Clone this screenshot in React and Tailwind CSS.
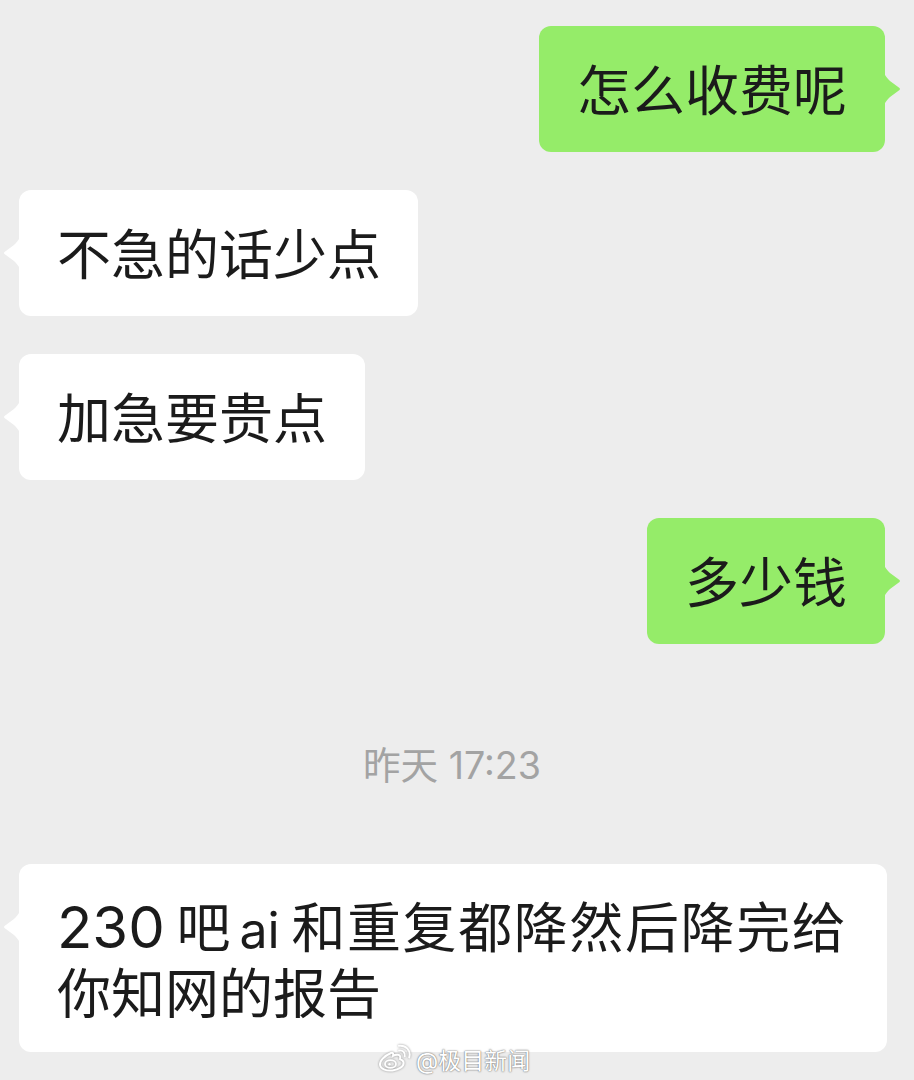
const font = { fontFamily: 'Inter, "Noto Sans CJK SC", sans-serif' };

function Tail({ side, color }) {
  const right = side === "right";
  return (
    <svg
      viewBox="0 0 17 32"
      className={`absolute top-[47px] h-[32px] w-[17px] ${right ? "right-[-16px]" : "left-[-16px] -scale-x-100"}`}
      fill={color}
    >
      <path d="M0 0 C2 4 4 6 6 8 L15.5 15 Q16.5 16 15.5 17 L6 24 C4 26 2 28 0 32 Z" />
    </svg>
  );
}

function Bubble({ side, children, className = "" }) {
  const right = side === "right";
  return (
    <div
      className={`relative rounded-[12px] px-[38px] text-[54px] leading-[67px] text-[#1b1b1b] ${right ? "self-end bg-[#95ec69]" : "self-start bg-white"} ${className}`}
    >
      <Tail side={side} color={right ? "#95ec69" : "#ffffff"} />
      {children}
    </div>
  );
}

function WeiboMark() {
  return (
    <svg viewBox="0 0 34 28" className="h-[28px] w-[34px]" fill="none" stroke="#ffffff" style={{ filter: "drop-shadow(0 0 1px #8f8f8f)" }}>
      <path d="M13 9 C6 12 1.5 17 2 21 C2.6 25.5 9 27 14.5 26.4 C21 25.6 26 22.5 25.6 18.6 C25.3 16.4 23.4 15.6 22 15 C22.8 12.6 21.8 11 19.8 10.8 C18 10.6 16 11.4 15 12 C15.6 9.6 15 8.4 13 9 Z" strokeWidth="2" />
      <ellipse cx="12.5" cy="20" rx="5.5" ry="3.8" strokeWidth="1.8" />
      <circle cx="11.5" cy="20.2" r="1.2" fill="#ffffff" stroke="none" />
      <path d="M21 6.5 C24.5 5.8 27.6 8.6 26.8 12.4" strokeWidth="1.8" strokeLinecap="round" />
      <path d="M21 1.8 C27.8 0.8 33.2 6.4 31.2 13.4" strokeWidth="2" strokeLinecap="round" />
    </svg>
  );
}

export default function App() {
  return (
    <div className="relative flex h-[1080px] w-[914px] flex-col overflow-hidden bg-[#ededed] pl-[19px] pr-[29px] pt-[26px]" style={font}>
      <Bubble side="right" className="flex h-[126px] items-center pt-[5px]">怎么收费呢</Bubble>
      <Bubble side="left" className="mt-[38px] flex h-[126px] w-[399px] items-center whitespace-nowrap pt-[5px]">不急的话少点</Bubble>
      <Bubble side="left" className="mt-[38px] flex h-[126px] items-center pt-[5px]">加急要贵点</Bubble>
      <Bubble side="right" className="mt-[38px] flex h-[126px] items-center pt-[5px]">多少钱</Bubble>
      <div className="mt-[99px] h-[46px] text-center text-[37.6px] leading-[46px] text-[#a3a3a3]">昨天 17:23</div>
      <Bubble side="left" className="mt-[75px] mr-[-2px] w-[868px] pb-[24px] pt-[30px]">
        <div className="h-[67px] whitespace-nowrap tracking-[1.6px] [word-spacing:-5px]">
          <span className="text-[58px] tracking-[0px]">230</span>{" "}<span className="tracking-[-3px]">吧</span>{" "}
          <span className="text-[50px] tracking-[0px]">ai</span>{" "}和重复都降然后降完给
        </div>
        <div>你知网的报告</div>
      </Bubble>
      <div className="absolute left-[378px] top-[1041px] flex items-center gap-[4px]">
        <WeiboMark />
        <span className="mt-[6px] text-[23px] leading-[28px] text-white" style={{ textShadow: "0 0 2px #777, 0 0 1px #777" }}>@极目新闻</span>
      </div>
    </div>
  );
}
